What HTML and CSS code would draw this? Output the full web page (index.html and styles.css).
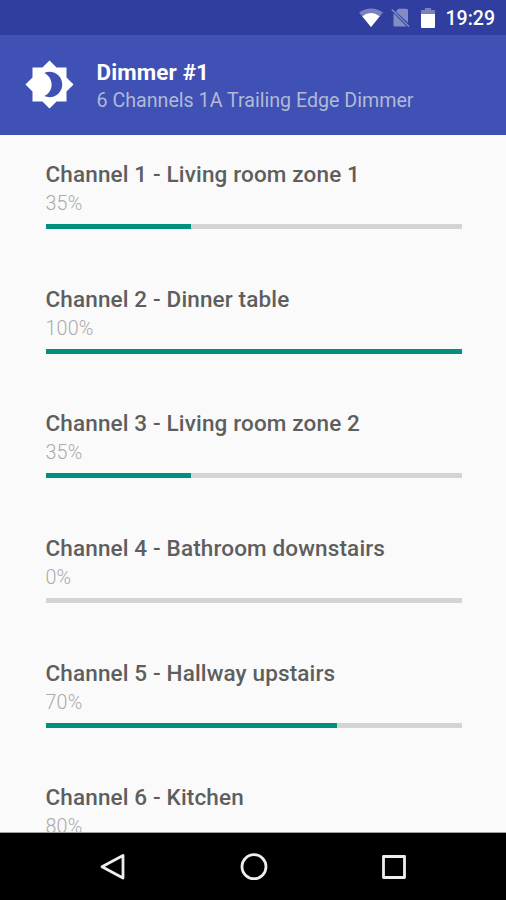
FILE: index.html
```html
<!DOCTYPE html>
<html lang="en">
<head>
<meta charset="utf-8">
<title>Dimmer #1</title>
<link rel="stylesheet" href="styles.css">
</head>
<body>
<div class="screen">
  <div class="status">
    <svg class="wifi" viewBox="0 0 24 19"><path class="dim" d="M0 4.500Q12-3.500 24 4.500L12 19z"/><path d="M3.300 8.200Q12 2 20.700 8.200L12 19z"/></svg>
    <svg class="nosim" viewBox="0 0 19 20"><path d="M7.500 .8H15.500Q17 .8 17 2.300V14.800L4.800 3.500zM2.500 5.300L15.500 18.500H4Q2.500 18.500 2.500 17z"/><path class="slash" d="M.8 1.500l17.200 17"/></svg>
    <svg class="battery" viewBox="0 0 14 20"><path class="dim" d="M4 0h6v2h3q1 0 1 1v3H0V3q0-1 1-1h3z"/><path d="M0 6h14v13q0 1-1 1H1q-1 0-1-1z"/></svg>
    <span class="time">19:29</span>
  </div>
  <header class="toolbar">
    <svg class="logo" viewBox="0 0 24 24"><path d="M20 15.310L23.310 12 20 8.690V4h-4.690L12 .69 8.690 4H4v4.690L.69 12 4 15.310V20h4.690L12 23.310 15.310 20H20v-4.690zM12 18c-.89 0-1.740-.2-2.500-.55C11.560 16.500 13 14.420 13 12s-1.440-4.500-3.500-5.450C10.260 6.200 11.110 6 12 6c3.310 0 6 2.690 6 6s-2.690 6-6 6z"/></svg>
    <div class="titles"><h1>Dimmer #1</h1><p>6 Channels 1A Trailing Edge Dimmer</p></div>
  </header>
  <main class="channels">
    <section class="channel"><h2>Channel 1 - Living room zone 1</h2><p>35%</p><div class="track"><div class="fill" style="width:35%"></div></div></section>
    <section class="channel"><h2>Channel 2 - Dinner table</h2><p>100%</p><div class="track"><div class="fill" style="width:100%"></div></div></section>
    <section class="channel"><h2>Channel 3 - Living room zone 2</h2><p>35%</p><div class="track"><div class="fill" style="width:35%"></div></div></section>
    <section class="channel"><h2>Channel 4 - Bathroom downstairs</h2><p>0%</p><div class="track"><div class="fill" style="width:0%"></div></div></section>
    <section class="channel"><h2>Channel 5 - Hallway upstairs</h2><p>70%</p><div class="track"><div class="fill" style="width:70%"></div></div></section>
    <section class="channel"><h2>Channel 6 - Kitchen</h2><p>80%</p><div class="track"><div class="fill" style="width:80%"></div></div></section>
  </main>
  <nav class="navbar">
    <svg viewBox="0 0 30 30"><path d="M25 3.500v22.500L4 14.700z"/></svg>
    <svg viewBox="0 0 30 30"><circle cx="15" cy="14.700" r="12"/></svg>
    <svg viewBox="0 0 30 30"><path d="M4.500 4.500h21v21h-21z"/></svg>
  </nav>
</div>
</body>
</html>
```
FILE: styles.css
```css
body { margin: 0; font-family: Roboto, sans-serif; }
h1, h2, p { margin: 0; }
.screen { display: flex; flex-direction: column; width: 506px; height: 900px; overflow: hidden; background: #fafafa; }
.status { display: flex; flex: none; align-items: center; justify-content: flex-end; height: 35px; padding-right: 11px; box-sizing: border-box; background: #303f9f; color: #fff; }
.status svg { fill: #fff; height: 20px; }
.dim { opacity: .35; }
.status .wifi { width: 24px; height: 19px; margin-right: 8px; }
.nosim { width: 19px; margin-right: 11px; opacity: .4; }
.slash { stroke: #fff; stroke-width: 1.5; }
.battery { width: 14px; margin-right: 11px; }
.time { font-size: 19.500px; font-weight: 500; line-height: 35px; padding-top: 1px; }
.toolbar { display: flex; flex: none; align-items: center; height: 100px; padding-left: 23.500px; background: #3f51b5; }
.logo { width: 51px; height: 51px; fill: #fff; margin: -1px 22px 0 0; }
.titles { padding-top: 3px; }
.titles h1 { font-size: 22.400px; font-weight: 700; line-height: 28px; letter-spacing: .15px; color: #fff; }
.titles p { font-size: 19.650px; line-height: 28px; padding-top: 1px; color: #b2b9d4; }
.channels { flex: 1; min-height: 0; overflow: hidden; padding: 25px 44.500px 0 45.500px; border-bottom: 1px solid #a0a0a0; }
.channel { height: 124.700px; }
.channel h2 { font-size: 22.500px; font-weight: 500; line-height: 29px; letter-spacing: .14px; color: #5e5e5e; }
.channel p { font-size: 19.700px; font-weight: 300; line-height: 29px; letter-spacing: .2px; color: #aaa; }
.track { height: 5px; margin-top: 6px; background: #d4d4d4; }
.fill { height: 100%; background: #009080; }
.navbar { display: flex; flex: none; align-items: center; justify-content: center; gap: 110.500px; height: 67px; padding-left: 1px; background: #000; }
.navbar svg { width: 30px; height: 30px; fill: none; stroke: #eee; stroke-width: 2.800; stroke-linejoin: round; }
```
